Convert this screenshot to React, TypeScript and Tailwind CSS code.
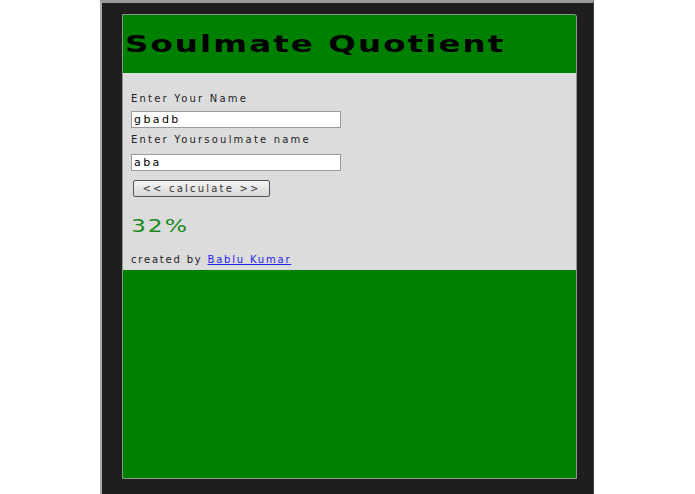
export default function App() {
  return (
    <div className="h-[494px] w-[695px] overflow-hidden bg-white font-['DejaVu_Sans',sans-serif]">
      <div className="ml-[100px] flex h-full w-[494px] flex-col border-l-[2px] border-t-[3px] border-r-[1px] border-l-[#a8a8a8] border-t-[#9a9a9a] border-r-[#3a3a3a] bg-[#1e1e1e] pb-[15px] pl-[20px] pr-[16px] pt-[11px]">
        <div className="flex flex-1 flex-col overflow-hidden rounded-tr-[3px] border border-[#8a9a8a] bg-[#008000]">
          <div className="flex h-[58px] items-center px-[2px] pt-[1px]">
            <h1 className="origin-left scale-x-[1.41] text-[23px] font-bold tracking-[1.5px] text-black">Soulmate Quotient</h1>
          </div>
          <div className="flex h-[197px] flex-col bg-[#dcdcdc] px-[8px] pt-[20px] text-[10px] tracking-[2.2px] text-[#222]">
            <label className="leading-[12px]">Enter Your Name</label>
            <input
              defaultValue="gbadb"
              className="mt-[6px] h-[17px] w-[210px] border border-[#9a9a9a] bg-white px-[2px] text-[11px] tracking-[2.4px] text-black outline-none"
            />
            <label className="mt-[6px] leading-[12px]">Enter Yoursoulmate name</label>
            <input
              defaultValue="aba"
              className="mt-[8px] h-[17px] w-[210px] border border-[#9a9a9a] bg-white px-[2px] text-[11px] tracking-[2.4px] text-black outline-none"
            />
            <button className="ml-[2px] mt-[9px] h-[17px] w-[137px] rounded-[2px] border border-[#555] bg-gradient-to-b from-[#f4f4f4] to-[#d8d8d8] text-[10px] leading-none tracking-[2.2px] text-[#333]">
              &lt;&lt; calculate &gt;&gt;
            </button>
            <div className="mt-[17px] origin-left scale-x-[1.3] text-[18px] leading-[24px] tracking-[1.5px] text-[#1a8a1a]">32%</div>
            <div className="mt-[16px] leading-[12px] tracking-[1.8px]">
              created by{" "}
              <a href="#" className="text-[#2222ee] underline">
                Bablu Kumar
              </a>
            </div>
          </div>
          <div className="flex-1 bg-[#008000]" />
        </div>
      </div>
    </div>
  );
}
